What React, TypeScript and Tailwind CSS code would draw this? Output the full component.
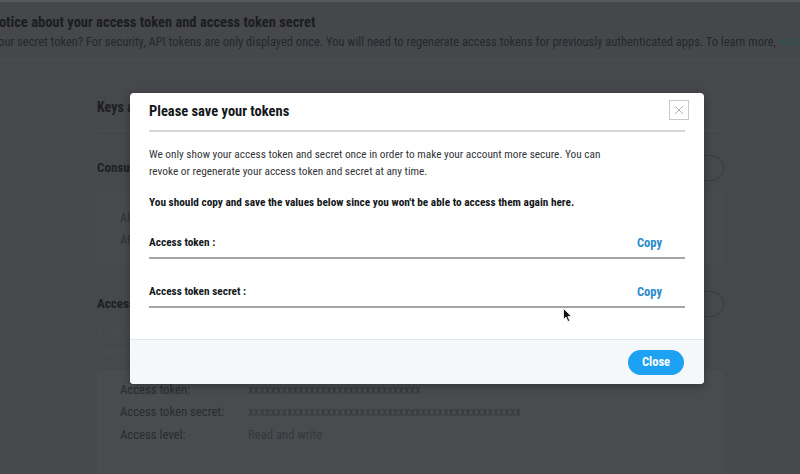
import React from "react";

const font = { fontFamily: "'Roboto Condensed', Roboto, 'Liberation Sans', Arial, sans-serif" };

function Row({ label, value }: { label: string; value: string }) {
  return (
    <div className="flex h-[22.5px] items-center text-[12.7px]">
      <div className="w-[128px] text-[#2a2c30]">{label}</div>
      <div className="text-[#36383c]">{value}</div>
    </div>
  );
}

export default function App() {
  return (
    <div className="relative h-[474px] w-[800px] overflow-hidden bg-[#46484c]" style={font}>
      {/* dimmed page */}
      <div className="flex h-full flex-col">
        <div className="h-[60px] border-t-2 border-b border-[#55575b] border-b-[#4a4c50] bg-[#45474b] pt-[11px]">
          <div className="-ml-[10px] whitespace-nowrap text-[14.5px] font-bold leading-[20px] text-[#1c1d20]">
            Notice about your access token and access token secret
          </div>
          <div className="-ml-[7px] -mt-[1px] whitespace-nowrap text-[12.5px] leading-[20px] text-[#26282b]">
            your secret token? For security, API tokens are only displayed once. You will need to regenerate access tokens for previously authenticated apps. To learn more, <span className="text-[#2c5552]">visit</span>
          </div>
        </div>
        <div className="flex flex-1 pl-[97px]">
          <div className="flex w-[627px] flex-col pt-[37px]">
            <div className="text-[14px] font-bold leading-[20px] text-[#1e1f22]">Keys and tokens</div>
            <div className="mt-[13px] h-px bg-[#4c4e52]" />
            <div className="mt-[24px] flex items-center justify-between">
              <div className="text-[13px] font-bold text-[#1e1f22]">Consumer API keys</div>
              <div className="h-[26px] w-[70px] rounded-full border border-[#393b3f]" />
            </div>
            <div className="mt-[12px] flex h-[72px] flex-col justify-center gap-[4px] bg-[#484a4e] pl-[23px]">
              <div className="text-[12px] text-[#303236]">API key:</div>
              <div className="text-[12px] text-[#303236]">API secret key:</div>
            </div>
            <div className="mt-[26px] flex items-center justify-between">
              <div className="text-[13px] font-bold text-[#1e1f22]">Access token &amp; access token secret</div>
              <div className="h-[26px] w-[70px] rounded-full border border-[#393b3f]" />
            </div>
            <div className="mt-[5px] text-[11.5px] leading-[19px] text-[#4b4d51]">
              Access token and access token secret for your account
              <br />
              Created for your app
            </div>
            <div className="mt-[10px] flex-1 bg-[#494b4f] pl-[23px] pt-[8px]">
              <Row label="Access token:" value="xxxxxxxxxxxxxxxxxxxxxxxxxxxxxxx" />
              <Row label="Access token secret:" value="xxxxxxxxxxxxxxxxxxxxxxxxxxxxxxxxxxxxxxxxxxxxxxxxx" />
              <Row label="Access level:" value="Read and write" />
            </div>
          </div>
        </div>
      </div>

      {/* modal */}
      <div className="absolute left-[130px] top-[93px] flex h-[291px] w-[574px] flex-col overflow-hidden rounded-[4px] bg-white shadow-[0_2px_10px_rgba(0,0,0,0.3)]">
        <div className="flex-1 px-[19px]">
          <div className="flex h-[39px] items-center border-b-2 border-[#d5d8db]">
            <div className="text-[14.5px] font-bold text-[#14171a]">Please save your tokens</div>
          </div>
          <div className="mt-[14px] text-[11.3px] leading-[17px] text-[#333639]">
            We only show your access token and secret once in order to make your account more secure. You can
            <br />
            revoke or regenerate your access token and secret at any time.
          </div>
          <div className="mt-[14px] text-[11.3px] font-bold leading-[17px] text-[#14171a]">
            You should copy and save the values below since you won't be able to access them again here.
          </div>
          <div className="mt-[23px] flex items-center justify-between border-b-2 border-[#a3a5a8] pb-[6px] text-[11.3px] font-bold leading-[17px]">
            <div className="text-[#14171a]">Access token :</div>
            <div className="pr-[23px] text-[12.5px] text-[#2a8dcd]">Copy</div>
          </div>
          <div className="mt-[24px] flex items-center justify-between border-b-2 border-[#a3a5a8] pb-[6px] text-[11.3px] font-bold leading-[17px]">
            <div className="text-[#14171a]">Access token secret :</div>
            <div className="pr-[23px] text-[12.5px] text-[#2a8dcd]">Copy</div>
          </div>
        </div>
        <div className="flex h-[45px] items-center justify-end border-t border-[#dfe5ea] bg-[#f5f8fa] pr-[20px]">
          <button className="h-[25px] w-[56px] rounded-full bg-[#1da1f2] text-[12.5px] font-bold text-white">
            Close
          </button>
        </div>
        <button className="absolute right-[15px] top-[7px] flex h-[20px] w-[20px] items-center justify-center border border-[#c8cacc] bg-white">
          <svg width="10" height="10" viewBox="0 0 10 10">
            <path d="M1 1 L9 9 M9 1 L1 9" stroke="#b0b3b6" strokeWidth="1" />
          </svg>
        </button>
      </div>

      {/* cursor */}
      <svg className="absolute left-[563px] top-[308px]" width="10" height="15" viewBox="0 0 10 15">
        <path d="M0.5 0.5 L0.5 11.5 L3 9 L5 13.5 L6.8 12.7 L4.9 8.4 L8.5 8.4 Z" fill="#111" stroke="#fff" strokeWidth="0.8" />
      </svg>
    </div>
  );
}
